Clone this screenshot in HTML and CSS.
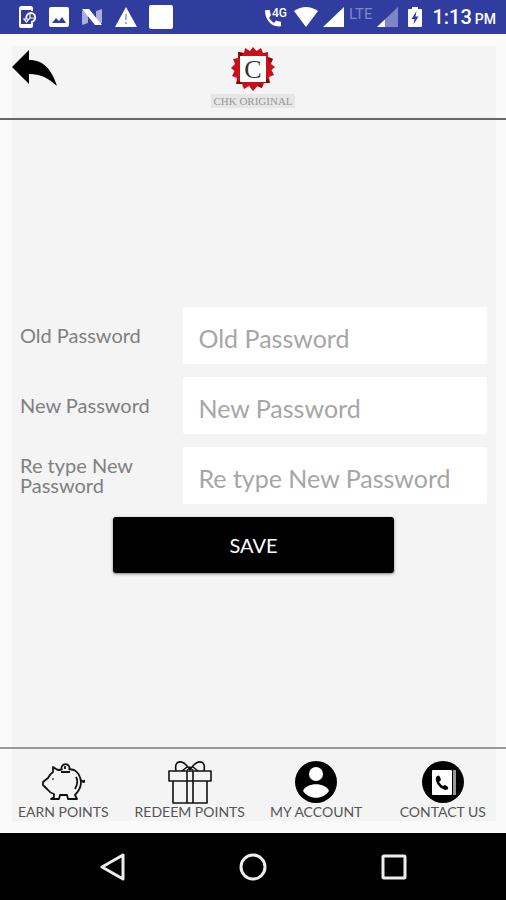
FILE: index.html
```
<!DOCTYPE html>
<html lang="en">
<head>
    <meta charset="UTF-8">
    <meta name="viewport" content="width=device-width, initial-scale=1.0">
    <title>Change Password</title>
    <link rel="stylesheet" href="styles.css">
</head>
<body>
    <div class="status-bar">
        <div class="status-left">
            <svg width="20" height="24" viewBox="0 0 20 24" fill="none" stroke="#fff" stroke-width="2">
                <path d="M15 6V3.500Q15 2 13.500 2H4.500Q3 2 3 3.500V20.500Q3 22 4.500 22H13.500Q15 22 15 20.500V18"/>
                <path d="M3 3.500H15M3 20.500H15" stroke-width="3"/>
                <path d="M9.500 14A4.500 4.500 0 1 1 14 17" stroke-width="1.800"/>
                <path d="M13 8V13H17M7 14H12L9.500 17Z" stroke-width="1.200"/>
            </svg>
            <svg width="20" height="20" viewBox="0 0 20 20">
                <rect width="20" height="20" rx="2" fill="#fff"/>
                <path d="M3 16L7 11L10 14L13 10L17 16Z" fill="#303c9e"/>
            </svg>
            <svg width="22" height="18" viewBox="0 0 22 18">
                <path d="M1 3L7 1V15L1 17ZM15 3L21 1V15L15 17Z" fill="#a9afdc"/>
                <path d="M1 1H8L21 17H14Z" fill="#fff"/>
            </svg>
            <svg width="22" height="20" viewBox="0 0 22 20">
                <path d="M11 0L22 20H0Z" fill="#fff"/>
                <path d="M11 7V13M11 15V17" stroke="#a9afdc" stroke-width="2"/>
            </svg>
            <svg width="24" height="24" viewBox="0 0 24 24"><rect width="24" height="24" rx="2" fill="#fff"/></svg>
        </div>
        <div class="status-right">
            <svg width="25" height="24" viewBox="0 0 25 24">
                <path d="M1 6Q1 5 2 5H5Q6 5 6 6Q6 8 7 10L5 13Q7 16 10 18L12 15.500Q14 16.500 16 16.500Q17 16.500 17 17.500V20.500Q17 21.500 16 21.500Q9 21.500 5 17Q1 12 1 6Z" fill="#fff"/>
                <text class="network-text" x="8" y="12">4G</text>
            </svg>
            <svg width="24" height="20" viewBox="0 0 24 20"><path d="M12 20L0 4Q12-4 24 4Z" fill="#fff"/></svg>
            <svg width="21" height="20" viewBox="0 0 21 20"><path d="M21 0V20H0Z" fill="#fff"/></svg>
            <span class="lte">LTE</span>
            <svg width="21" height="20" viewBox="0 0 21 20">
                <path d="M21 0V20H0Z" fill="#7f86c8"/>
                <path d="M8 12.400V20H0Z" fill="#fff"/>
            </svg>
            <svg width="24" height="20" viewBox="0 0 24 20">
                <path d="M9 0H15V2H18Q19 2 19 3V19Q19 20 18 20H6Q5 20 5 19V3Q5 2 6 2H9Z" fill="#fff"/>
                <path d="M13.500 4L8.500 12H11.500L10.500 17.500L15.500 9.500H12.500Z" fill="#303c9e"/>
            </svg>
            <span class="time">1:13 <small>PM</small></span>
        </div>
    </div>

    <div class="app">
        <header class="header">
            <button class="back-btn" type="button" aria-label="Back">
                <svg width="46" height="38" viewBox="0 0 46 38"><path d="M0 17L17 0V10C32 10 40 20 45 36C36 28 29 24 17 24V34Z"/></svg>
            </button>
            <div class="logo">
                <svg width="46" height="46" viewBox="0 0 46 46">
                    <path d="M23 1L26.500 5L31 2L33 7L38 6L38 11L43 13L41 18L45 21L41.500 24L44 29L39 31L40 37L34 37L32 42L27.500 40L23 45L19 40L14 43L12 38L6 38L7 32L2 30L4.500 25L1 22L5 18L3 13L8 12L8 6L14 7L15 2L20 5Z" fill="#c8101a"/>
                    <path d="M8 6L14 7L9 13ZM38 11L43 13L39 17ZM34 37L40 37L37 32ZM12 38L6 38L9 34ZM27 40L32 42L31 38Z" fill="#7d090e"/>
                    <rect x="10" y="10" width="26" height="26" fill="#fff"/>
                    <text class="logo-letter" x="23" y="32">C</text>
                </svg>
                <span class="logo-name">CHK ORIGINAL</span>
            </div>
        </header>

        <main class="content">
            <form class="password-form">
                <div class="form-row">
                    <label for="oldPassword">Old Password</label>
                    <input type="password" id="oldPassword" placeholder="Old Password">
                </div>
                <div class="form-row">
                    <label for="newPassword">New Password</label>
                    <input type="password" id="newPassword" placeholder="New Password">
                </div>
                <div class="form-row">
                    <label for="retypePassword">Re type New Password</label>
                    <input type="password" id="retypePassword" placeholder="Re type New Password">
                </div>
                <button class="save-btn" type="button">SAVE</button>
            </form>
        </main>

        <nav class="tabs">
            <a href="#earn">
                <svg width="44" height="44" viewBox="0 0 44 44" fill="none" stroke="#111" stroke-width="1.800" stroke-linejoin="round">
                    <path d="M21 9Q18 11 15 9L12 7V12Q9 14 7 18L2 22V25L6 29Q9 33 13 34V37L10 39H18L19 35H26L27 39H36L34 35Q40 29 40 22Q39 13 33 10L28 9"/>
                    <path d="M21 10A4 4 0 1 1 28 10M24 6V9M20 12H29"/>
                    <path d="M35 17Q38 22 34 29M40 20Q44 24 43 20"/>
                    <path d="M11 19H13" stroke="#777"/>
                </svg>
                <span>EARN POINTS</span>
            </a>
            <a href="#redeem">
                <svg width="44" height="44" viewBox="0 0 44 44" fill="none" stroke="#111" stroke-width="1.600" stroke-linejoin="round">
                    <path d="M1 11H43V21H1ZM5 21V43H39V21M19 11V43M25 11V43"/>
                    <path d="M22 10Q15-1 9 3Q7 5 8 11M22 10Q29-1 35 3Q37 5 36 11M14 11L19 7M30 11L25 7M19 10L22 7L25 10"/>
                </svg>
                <span>REDEEM POINTS</span>
            </a>
            <a href="#account">
                <svg width="44" height="44" viewBox="0 0 44 44">
                    <circle cx="22" cy="22" r="21"/>
                    <circle cx="22" cy="14" r="7" fill="#fff"/>
                    <path d="M9 31C12 22 32 22 35 31C29 40 15 40 9 31Z" fill="#fff"/>
                </svg>
                <span>MY ACCOUNT</span>
            </a>
            <a href="#contact">
                <svg width="44" height="44" viewBox="0 0 44 44">
                    <circle cx="22" cy="22" r="21"/>
                    <rect x="11" y="10" width="20" height="25" rx="1" fill="#fff"/>
                    <path d="M32 10H35V35H32Z" fill="#999"/>
                    <path d="M15 17Q18 14 19 17L20 20L18 22Q20 25 22 26L24 25L27 27Q28 30 24 30Q20 29 17 25Q14 20 15 17Z"/>
                </svg>
                <span>CONTACT US</span>
            </a>
        </nav>
    </div>

    <div class="system-nav">
        <button type="button" aria-label="Back"><svg width="28" height="28" viewBox="0 0 28 28"><path d="M25 2V26L4 14Z"/></svg></button>
        <button type="button" aria-label="Home"><svg width="28" height="28" viewBox="0 0 28 28"><circle cx="14" cy="14" r="12"/></svg></button>
        <button type="button" aria-label="Recent apps"><svg width="28" height="28" viewBox="0 0 28 28"><rect x="3" y="3" width="22" height="22" rx="1"/></svg></button>
    </div>
</body>
</html>
```
FILE: styles.css
```
* {
    margin: 0;
    padding: 0;
    box-sizing: border-box;
    font-family: 'Lato', sans-serif;
}

body {
    min-height: 100vh;
    display: flex;
    flex-direction: column;
}

button {
    border: none;
    background: none;
    cursor: pointer;
}

svg {
    display: block;
    flex-shrink: 0;
}

.status-bar {
    height: 34px;
    padding: 0 10px 0 17px;
    background: #303c9e;
    color: #fff;
    display: flex;
    justify-content: space-between;
    align-items: center;
}

.status-left {
    display: flex;
    align-items: center;
    gap: 12px;
}

.status-right {
    display: flex;
    align-items: center;
    gap: 5px;
}

.network-text {
    font: 500 12px 'Roboto', sans-serif;
    fill: #fff;
}

.lte {
    font-family: 'Roboto', sans-serif;
    font-size: 15px;
    align-self: flex-start;
    color: #7f86c8;
}

.time {
    font-family: 'Roboto', sans-serif;
    font-size: 20px;
    font-weight: 500;
    white-space: nowrap;
}

.time small {
    font-family: inherit;
    font-size: 14px;
    margin-left: -2px;
}

/* lighter edge around the grey sheet */
.app {
    flex: 1;
    display: flex;
    flex-direction: column;
    background: linear-gradient(#f4f4f4, #f4f4f4) 12px 12px / calc(100% - 22px) calc(100% - 24px) no-repeat #fafafa;
}

.header {
    height: 86px;
    padding: 12px;
    border-bottom: 2px solid #666;
    display: grid;
    grid-template-columns: 1fr auto 1fr;
    align-items: start;
}

.back-btn {
    padding-top: 4px;
    justify-self: start;
}

.logo {
    display: flex;
    flex-direction: column;
    align-items: center;
}

.logo-letter {
    font: 26px 'Liberation Serif', serif;
    fill: #333;
    text-anchor: middle;
}

.logo-name {
    margin-top: 2px;
    padding: 0 2px;
    background: #e6e6e6;
    color: #999;
    font: 11px/14px 'Liberation Serif', serif;
}

.content {
    flex: 1;
    display: flex;
    flex-direction: column;
    justify-content: center;
    padding: 12px 19px 0 20px;
}

.password-form {
    display: flex;
    flex-direction: column;
    gap: 13px;
}

.form-row {
    display: grid;
    grid-template-columns: 35% 65%;
    align-items: center;
}

.form-row label {
    padding-right: 32px;
    font-size: 20px;
    line-height: 20px;
    color: #808080;
}

.form-row input {
    width: 100%;
    height: 57px;
    padding: 6px 15px 0;
    border: none;
    border-radius: 2px;
    background: #fff;
    color: #333;
    font-size: 25px;
}

.form-row input::placeholder {
    color: #a6a6a6;
    opacity: 1;
}

.save-btn {
    align-self: center;
    width: 60%;
    height: 56px;
    border-radius: 3px;
    background: #000;
    color: #fff;
    font-size: 20px;
    box-shadow: 0 1px 3px rgba(0, 0, 0, 0.5);
}

.tabs {
    height: 86px;
    padding-top: 11px;
    border-top: 2px solid #999;
    display: grid;
    grid-template-columns: repeat(4, 1fr);
}

.tabs a {
    display: flex;
    flex-direction: column;
    align-items: center;
    color: #555;
    text-decoration: none;
    font-size: 14px;
    line-height: 16px;
    white-space: nowrap;
}

.system-nav {
    height: 67px;
    padding: 0 42px;
    background: #000;
    display: grid;
    grid-template-columns: repeat(3, 1fr);
    align-items: center;
    justify-items: center;
}

.system-nav svg {
    fill: none;
    stroke: #eee;
    stroke-width: 3;
    stroke-linejoin: round;
}
```
